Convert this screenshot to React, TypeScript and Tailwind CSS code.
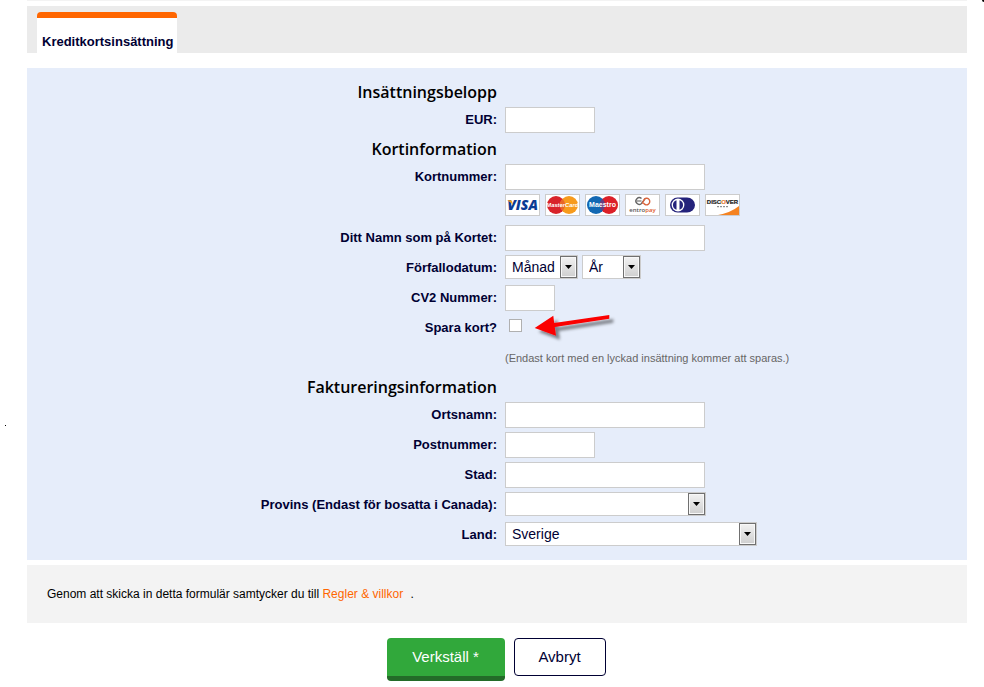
import type { InputHTMLAttributes, ReactNode, SelectHTMLAttributes } from "react";

const arial = "font-['Liberation_Sans',Arial,sans-serif]";

function SectionTitle({ children }: { children: ReactNode }) {
  return (
    <h2 className="h-[27px] w-1/2 text-right font-['Open_Sans',sans-serif] text-base leading-7 font-semibold text-black">
      {children}
    </h2>
  );
}

function Row({ label, htmlFor, children }: { label?: string; htmlFor?: string; children: ReactNode }) {
  return (
    <div className="flex min-h-[30px] items-start pt-0.5">
      <div className="w-1/2 shrink-0 text-right text-[13px] leading-[26px] font-bold">
        {label && <label htmlFor={htmlFor}>{label}</label>}
      </div>
      <div className="flex pl-2">{children}</div>
    </div>
  );
}

function TextField({ className = "", ...rest }: InputHTMLAttributes<HTMLInputElement>) {
  return (
    <input
      type="text"
      className={`h-[26px] border border-[#ccc] bg-white px-1.5 text-sm outline-none ${className}`}
      {...rest}
    />
  );
}

function SelectField({ className = "", children, ...rest }: SelectHTMLAttributes<HTMLSelectElement>) {
  return (
    <div className={`relative h-6 ${className}`}>
      <select
        className="block h-6 w-full appearance-none border border-[#ccc] bg-white pr-4 pl-1.5 text-sm outline-none"
        {...rest}
      >
        {children}
      </select>
      <span className="pointer-events-none absolute top-px right-px flex h-[22px] w-[17px] items-center justify-center border border-[#707070] bg-gradient-to-b from-[#f2f2f2] to-[#cfcfcf] shadow-[inset_0_0_0_1px_#f8f8f8]">
        <svg width="7" height="4" viewBox="0 0 7 4" aria-hidden="true">
          <path d="M0 0H7L3.5 4Z" fill="#000" />
        </svg>
      </span>
    </div>
  );
}

function Card({ name, children }: { name: string; children: ReactNode }) {
  return (
    <svg width="35" height="22" viewBox="0 0 35 22" role="img" aria-label={name}>
      <rect x="0.5" y="0.5" width="34" height="21" fill="#fff" stroke="#ccc" />
      {children}
    </svg>
  );
}

function CardLogos() {
  return (
    <div className="flex h-[29px] gap-[5px]">
      <Card name="Visa">
        <text x="17.5" y="16" textAnchor="middle" fontFamily="Open Sans, sans-serif" fontSize="14" fontWeight="800" fontStyle="italic" fill="#0b3c94">
          VISA
        </text>
        <path d="M2 6.2H5.6Q6.8 6.2 7.1 7.6L8 11.5Q6 7.8 2 6.2Z" fill="#f5a11c" />
      </Card>
      <Card name="MasterCard">
        <circle cx="11" cy="11" r="9" fill="#d8232a" />
        <circle cx="24" cy="11" r="9" fill="#f79b1c" />
        <path d="M17.5 4.8A9 9 0 0 1 17.5 17.2A9 9 0 0 1 17.5 4.8Z" fill="#e8662a" />
        <text x="17.3" y="13" textAnchor="middle" fontFamily="Liberation Sans, sans-serif" fontSize="5.8" fontWeight="700" fontStyle="italic" fill="#fff">
          MasterCard
        </text>
      </Card>
      <Card name="Maestro">
        <circle cx="11" cy="11" r="9" fill="#1268b3" />
        <circle cx="24" cy="11" r="9" fill="#dc2028" />
        <path d="M17.5 4.8A9 9 0 0 1 17.5 17.2A9 9 0 0 1 17.5 4.8Z" fill="#633f83" />
        <text x="17.5" y="13.3" textAnchor="middle" fontFamily="Liberation Sans, sans-serif" fontSize="7" fontWeight="700" fill="#fff">
          Maestro
        </text>
      </Card>
      <Card name="Entropay">
        <g fill="none" strokeWidth="1.4">
          <path d="M16.5 4.6A3.3 3.3 0 1 0 16.5 9.4L20 4.8" stroke="#666" />
          <path d="M12 7H16.5" stroke="#666" strokeWidth="1.1" />
          <path d="M17.3 9.6L19.5 4.9A3.3 3.3 0 1 1 18.6 9.2" stroke="#d9643c" />
        </g>
        <text x="17.5" y="17.6" textAnchor="middle" fontFamily="Open Sans, sans-serif" fontSize="6" fontWeight="600" fill="#555">
          entro<tspan fill="#e0592a">pay</tspan>
        </text>
      </Card>
      <Card name="Diners Club">
        <path d="M12.5 3.5H22A8 7.5 0 0 1 22 18.5H12.5A7.5 7.5 0 0 1 12.5 3.5Z" fill="#25237b" />
        <circle cx="13" cy="11" r="6.4" fill="#fff" />
        <path d="M11.5 6.3A4.9 4.9 0 0 0 11.5 15.7ZM14.5 6.3A4.9 4.9 0 0 1 14.5 15.7Z" fill="#25237b" />
      </Card>
      <Card name="Discover">
        <path d="M34 12V21H13Q26 18.5 34 12Z" fill="#f58220" />
        <text x="17.5" y="10.4" textAnchor="middle" fontFamily="Liberation Sans, sans-serif" fontSize="6" fontWeight="700" fill="#222" stroke="#222" strokeWidth="0.2">
          DISC<tspan fill="#e8792b" stroke="#e8792b">O</tspan>VER
        </text>
        <path d="M12 12.7H23" stroke="#777" strokeDasharray="2 1" />
      </Card>
    </div>
  );
}

function PointerArrow() {
  return (
    <svg className="absolute -top-1.5 left-6 overflow-visible" width="86" height="32" viewBox="0 0 86 32" aria-hidden="true">
      <defs>
        <filter id="arrow-shadow" x="-20%" y="-30%" width="150%" height="190%">
          <feDropShadow dx="4" dy="4" stdDeviation="1.6" floodColor="#000" floodOpacity="0.45" />
        </filter>
      </defs>
      <path
        d="M5.7 19L24.3 6.7L25.2 14L80.3 6V9.8L25.8 18L27 26.7Z"
        fill="#fb0000"
        filter="url(#arrow-shadow)"
      />
    </svg>
  );
}

export default function App() {
  return (
    <div className={`relative bg-white pr-[17px] pl-[27px] text-[#000033] ${arial}`}>
      <div className="mb-[5px] h-px bg-[#f3f3f3]" />
      <nav className="flex h-[47px] items-end bg-[#ebebeb] pl-2.5">
        <button
          type="button"
          className="h-[41px] rounded-t border-t-6 border-[#ff6600] bg-white pt-3 pr-1 pl-[5px] text-[13px] leading-6 font-bold"
        >
          Kreditkortsinsättning
        </button>
      </nav>

      <form onSubmit={(e) => e.preventDefault()}>
        <div className="mt-[15px] bg-[#e6edfa] py-2.5">
          <SectionTitle>Insättningsbelopp</SectionTitle>
          <Row label="EUR:" htmlFor="amount">
            <TextField id="amount" className="w-[90px]" />
          </Row>

          <SectionTitle>Kortinformation</SectionTitle>
          <Row label="Kortnummer:" htmlFor="card-number">
            <TextField id="card-number" className="w-[200px]" />
          </Row>
          <Row>
            <CardLogos />
          </Row>
          <Row label="Ditt Namn som på Kortet:" htmlFor="card-name">
            <TextField id="card-name" className="w-[200px]" />
          </Row>
          <Row label="Förfallodatum:" htmlFor="month">
            <div className="flex gap-1">
              <SelectField id="month" className="w-[73px]">
                <option>Månad</option>
              </SelectField>
              <SelectField aria-label="År" className="w-[59px]">
                <option>År</option>
              </SelectField>
            </div>
          </Row>
          <Row label="CV2 Nummer:" htmlFor="cv2">
            <TextField id="cv2" className="w-[50px]" />
          </Row>
          <Row label="Spara kort?" htmlFor="save-card">
            <div className="relative pt-1 pl-1">
              <input
                id="save-card"
                type="checkbox"
                className="block size-[13px] appearance-none border border-[#b0b0b0] bg-white checked:bg-[#000033]"
              />
              <PointerArrow />
            </div>
          </Row>
          <Row>
            <p className="text-[11px] leading-[26px] text-[#666]">
              (Endast kort med en lyckad insättning kommer att sparas.)
            </p>
          </Row>

          <SectionTitle>Faktureringsinformation</SectionTitle>
          <Row label="Ortsnamn:" htmlFor="place">
            <TextField id="place" className="w-[200px]" />
          </Row>
          <Row label="Postnummer:" htmlFor="zip">
            <TextField id="zip" className="w-[90px]" />
          </Row>
          <Row label="Stad:" htmlFor="city">
            <TextField id="city" className="w-[200px]" />
          </Row>
          <Row label="Provins (Endast för bosatta i Canada):" htmlFor="province">
            <SelectField id="province" className="w-[201px]">
              <option></option>
            </SelectField>
          </Row>
          <Row label="Land:" htmlFor="country">
            <SelectField id="country" className="w-[252px]">
              <option>Sverige</option>
            </SelectField>
          </Row>
        </div>

        <p className="mt-[5px] bg-[#f3f3f3] px-5 py-[17px] text-xs leading-6 text-black">
          Genom att skicka in detta formulär samtycker du till{" "}
          <a href="#villkor" className="mr-1 text-[#ff6600]">
            Regler &amp; villkor
          </a>{" "}
          .
        </p>

        <div className="mt-[15px] flex items-start justify-center gap-[9px] pr-0.5">
          <button
            type="submit"
            className="h-[43px] w-[118px] rounded border-b-5 border-[#236b28] bg-[#31a83b] text-[15px] text-white"
          >
            Verkställ *
          </button>
          <button
            type="button"
            className="h-[38px] w-[92px] rounded border border-[#000033] bg-white text-[15px] text-[#000033]"
          >
            Avbryt
          </button>
        </div>
      </form>

      <span className="absolute top-[425px] left-[5px] size-px bg-black" />
      <span className="absolute top-0 right-0 h-0.5 w-0.5 rounded-bl-sm bg-black" />
    </div>
  );
}
